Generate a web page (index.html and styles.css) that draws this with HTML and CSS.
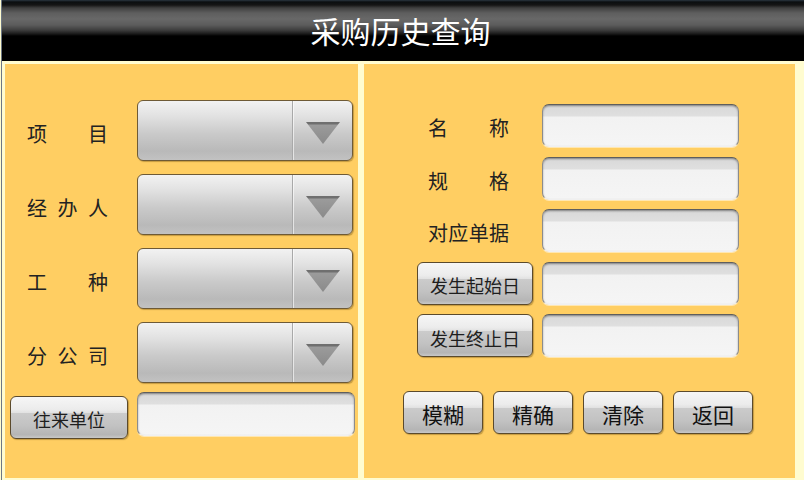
FILE: index.html
```html
<!DOCTYPE html>
<html lang="zh-CN">
<head>
<meta charset="utf-8">
<title>采购历史查询</title>
<link rel="stylesheet" href="styles.css">
</head>
<body>
<div class="screen">
  <header class="titlebar"><h1 class="title">采购历史查询</h1></header>
  <main class="main">
    <section class="panel panel-left">
      <div class="frow">
        <span class="label">项目</span>
        <div class="select"><span class="select-arrow"></span></div>
      </div>
      <div class="frow">
        <span class="label">经办人</span>
        <div class="select"><span class="select-arrow"></span></div>
      </div>
      <div class="frow">
        <span class="label">工种</span>
        <div class="select"><span class="select-arrow"></span></div>
      </div>
      <div class="frow">
        <span class="label">分公司</span>
        <div class="select"><span class="select-arrow"></span></div>
      </div>
      <div class="frow frow-btn">
        <button class="btn btn-small btn-unit">往来单位</button>
        <div class="input input-unit"></div>
      </div>
    </section>
    <section class="panel panel-right">
      <div class="rrow"><span class="label">名称</span><div class="input"></div></div>
      <div class="rrow"><span class="label">规格</span><div class="input"></div></div>
      <div class="rrow"><span class="label">对应单据</span><div class="input"></div></div>
      <div class="rrow"><button class="btn btn-small btn-date">发生起始日</button><div class="input"></div></div>
      <div class="rrow"><button class="btn btn-small btn-date">发生终止日</button><div class="input"></div></div>
      <div class="actions">
        <button class="btn btn-action">模糊</button>
        <button class="btn btn-action">精确</button>
        <button class="btn btn-action">清除</button>
        <button class="btn btn-action">返回</button>
      </div>
    </section>
  </main>
</div>
</body>
</html>
```
FILE: styles.css
```css
* { box-sizing: border-box; }
html, body {
  margin: 0;
  padding: 0;
  width: 804px;
  height: 480px;
  overflow: hidden;
  background: #fffcd0;
  font-family: "Noto Sans CJK SC", "Noto Sans", sans-serif;
}
.screen {
  width: 804px;
  height: 480px;
  display: flex;
  flex-direction: column;
  border-left: 1px solid #6d7784;
  margin-left: 1px;
}
.titlebar {
  height: 61px;
  flex: none;
  background: linear-gradient(to bottom,
    #2a3640 0px, #0b0e10 2px, #151515 5px, #404040 8px, #5e5e5e 13px,
    #686868 19px, #5c5c5c 25px, #3e3e3e 30px, #181818 34px, #000 36px, #000 100%);
  display: flex;
  justify-content: center;
  padding-top: 10px;
}
.title {
  margin: 0 0 0 -6px;
  color: #ffffff;
  font-size: 30px;
  font-weight: normal;
  line-height: 40px;
  height: 40px;
}
.main {
  flex: 1;
  display: flex;
  gap: 6px;
  padding: 3px 10px 2px 3px;
}
.panel {
  background: #ffce62;
  height: 414px;
}
.panel-left {
  width: 353px;
  flex: none;
  padding-top: 36px;
  display: flex;
  flex-direction: column;
  gap: 13px;
}
.panel-right {
  flex: 1;
  padding: 40px 0 0 53px;
  display: flex;
  flex-direction: column;
  gap: 9.5px;
}
.frow {
  display: flex;
  align-items: center;
  padding-left: 22px;
  gap: 29px;
  height: 61px;
}
.frow-btn {
  padding-left: 5px;
  gap: 9px;
  height: 44px;
  margin-top: -3px;
}
.label {
  width: 81px;
  font-size: 20px;
  color: #222;
  text-align: justify;
  text-align-last: justify;
  line-height: 24px;
  margin-top: 7px;
  flex: none;
}
.select {
  position: relative;
  width: 216px;
  height: 61px;
  border: 1px solid #6e5a36;
  border-radius: 6px;
  background: linear-gradient(to bottom, #f2f2f2 0%, #e2e2e2 25%, #cacaca 55%, #b9b9b9 85%, #c2c2c2 100%);
  box-shadow: 1px 1px 1px rgba(90, 60, 0, 0.35);
  flex: none;
}
.select::before {
  content: "";
  position: absolute;
  left: 154px;
  top: 0;
  bottom: 0;
  width: 1px;
  background: #a9a9a9;
  box-shadow: 1px 0 0 rgba(255,255,255,0.6);
}
.select-arrow {
  position: absolute;
  left: 168px;
  top: 21px;
  width: 34px;
  height: 22px;
  background: linear-gradient(to bottom, #6f6f6f 0, #6f6f6f 2px, #9b9b9b 3px, #8a8a8a 100%);
  clip-path: polygon(0 0, 100% 0, 50% 100%);
}
.input {
  height: 43px;
  border: 1px solid #8c8c8c;
  border-top-color: #5e5e5e;
  border-bottom-color: #f0f0f0;
  border-radius: 7px;
  background: linear-gradient(to bottom, #c9c9c9 0, #dadada 3px, #dfdfdf 11px, #f2f2f2 12px, #f5f5f5 100%);
  box-shadow: inset 0 1px 2px rgba(0,0,0,0.35), 0 1px 0 rgba(255,255,255,0.5);
}
.input-unit {
  width: 218px;
  height: 44px;
  margin-top: -2px;
}
.rrow {
  display: flex;
  align-items: center;
  height: 43px;
}
.rrow .label {
  margin-left: 11px;
  margin-right: 33px;
  margin-top: 5px;
}
.rrow .input {
  width: 197px;
  flex: none;
}
.btn {
  font-family: "Noto Sans CJK SC", "Noto Sans", sans-serif;
  border: 1px solid #5b4a2c;
  border-radius: 6px;
  background: linear-gradient(to bottom, #f6f6f6 0%, #ececec 30%, #e2e2e2 38%, #cbcbcb 40%, #c2c2c2 70%, #b5b5b5 92%, #c8c8c8 100%);
  color: #1e1e1e;
  padding: 0;
  box-shadow: 1px 1px 1px rgba(90, 60, 0, 0.35);
  flex: none;
}
.btn-small {
  font-size: 18px;
  line-height: 22px;
  padding-top: 4px;
}
.btn-unit {
  width: 118px;
  height: 43px;
  margin-top: 4px;
}
.btn-date {
  width: 116px;
  height: 43px;
  margin-right: 9px;
}
.actions {
  display: flex;
  gap: 10px;
  margin-left: -14px;
  margin-top: 24.5px;
}
.btn-action {
  width: 80px;
  height: 43px;
  font-size: 21px;
  line-height: 26px;
  padding-top: 3px;
  color: #111;
}
```
